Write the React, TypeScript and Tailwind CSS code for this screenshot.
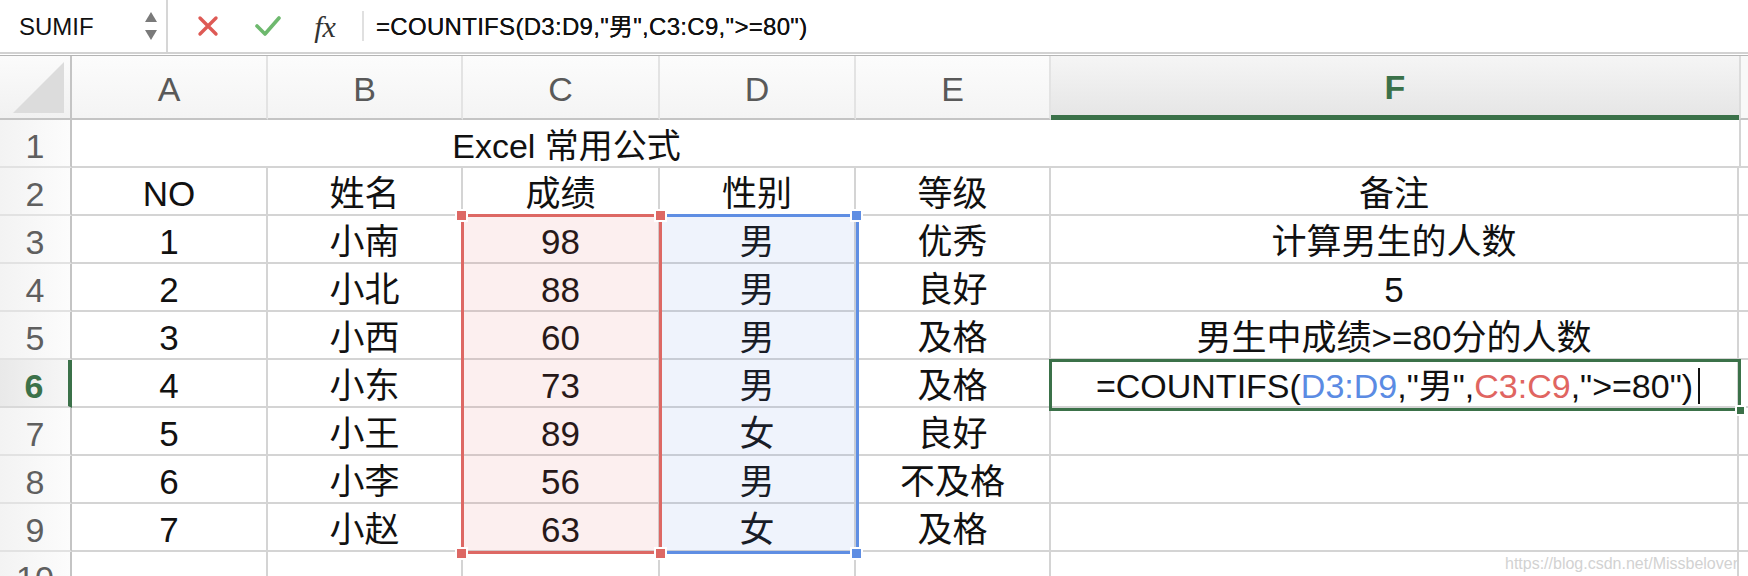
import React from 'react';

const widths = ['w-[196px]', 'w-[195px]', 'w-[197px]', 'w-[196px]', 'w-[195px]', 'w-[688px]'];
const letters = ['A', 'B', 'C', 'D', 'E', 'F'];

const rows: string[][] = [
  ['NO', '姓名', '成绩', '性别', '等级', '备注'],
  ['1', '小南', '98', '男', '优秀', '计算男生的人数'],
  ['2', '小北', '88', '男', '良好', '5'],
  ['3', '小西', '60', '男', '及格', '男生中成绩>=80分的人数'],
  ['4', '小东', '73', '男', '及格', ''],
  ['5', '小王', '89', '女', '良好', ''],
  ['6', '小李', '56', '男', '不及格', ''],
  ['7', '小赵', '63', '女', '及格', ''],
  ['', '', '', '', '', ''],
];

function RowHead({ n, active }: { n: number; active?: boolean }) {
  return (
    <div
      className={
        active
          ? 'w-[72px] shrink-0 h-full flex items-center justify-center pt-[7px] text-[34px] border-b-2 border-[#d9d9d9] border-r-[4px] border-r-[#3b7149] bg-gradient-to-r from-[#e9e9e9] to-[#f6f6f6] text-[#3b7149] font-bold'
          : 'w-[72px] shrink-0 h-full flex items-center justify-center pt-[7px] text-[34px] border-b-2 border-[#e2e2e2] border-r-2 border-r-[#c4c4c4] bg-gradient-to-r from-[#f3f3f3] to-[#fcfcfc] text-[#5f5f5f]'
      }
    >
      {n}
    </div>
  );
}

function Handle({ className }: { className: string }) {
  return <div className={'absolute w-[13px] h-[13px] border-2 border-white ' + className} />;
}

export default function App() {
  return (
    <div className="relative w-[1748px] h-[576px] overflow-hidden bg-white font-['Liberation_Sans','Noto_Sans_CJK_SC',sans-serif] text-[#111]">
      {/* FORMULA BAR */}
      <div className="h-[52px] flex items-center text-[24px]">
        <div className="w-[168px] h-full flex items-center border-r-2 border-[#d6d6d6] pl-[19px] pr-[8px]">
          <span className="flex-1 pt-[2px]">SUMIF</span>
          <svg width="14" height="34" viewBox="0 0 14 34">
            <path d="M7 3 L13 13 L1 13 Z" fill="#7a7a7a" />
            <path d="M7 31 L13 21 L1 21 Z" fill="#7a7a7a" />
          </svg>
        </div>
        <div className="w-[80px] flex justify-center">
          <svg width="22" height="22" viewBox="0 0 22 22">
            <path d="M3 3 L19 19 M19 3 L3 19" stroke="#de5a55" strokeWidth="3.4" strokeLinecap="round" />
          </svg>
        </div>
        <div className="w-[40px] flex justify-center">
          <svg width="26" height="22" viewBox="0 0 26 22">
            <path d="M2 11 L10 19 L24 3" stroke="#6eb96e" strokeWidth="3.6" fill="none" strokeLinecap="round" strokeLinejoin="round" />
          </svg>
        </div>
        <div className="w-[74px] flex justify-center items-center font-['Liberation_Serif',serif] italic text-[30px] text-[#333]">
          fx
        </div>
        <div className="h-[30px] w-[2px] bg-[#e0e0e0]" />
        <div className="pl-[12px] pt-[2px] tracking-[0.3px] [text-shadow:0_0_0.4px_#111]">=COUNTIFS(D3:D9,"男",C3:C9,"&gt;=80")</div>
      </div>
      <div className="h-[4px] border-t-2 border-b-[1px] border-t-[#d2d2d2] border-b-[#b5b5b5]" />

      {/* COLUMN HEADERS */}
      <div className="h-[64px] flex text-[34px] text-[#595959]">
        <div className="w-[72px] shrink-0 h-full border-r-2 border-b-2 border-[#c4c4c4] bg-gradient-to-b from-[#fbfbfb] to-[#f1f1f1] flex items-end justify-end pb-[3px] pr-[4px]">
          <svg width="54" height="54" viewBox="0 0 54 54">
            <path d="M1 52 L52 1 L52 52 Z" fill="#dcdcdc" />
          </svg>
        </div>
        {letters.map((l, i) =>
          l === 'F' ? (
            <div
              key={l}
              className={widths[i] + ' shrink-0 h-full flex items-center justify-center pt-[4px] border-b-[5px] border-[#3b7149] bg-gradient-to-b from-[#f5f5f5] to-[#e6e6e6] text-[#3b7149] font-bold'}
            >
              {l}
            </div>
          ) : (
            <div
              key={l}
              className={widths[i] + ' shrink-0 h-full flex items-center justify-center pt-[4px] border-r-2 border-r-[#e3e3e3] border-b-2 border-b-[#c4c4c4] bg-gradient-to-b from-[#fcfcfc] to-[#f4f4f4]'}
            >
              {l}
            </div>
          )
        )}
        <div className="flex-1 h-full border-l-2 border-[#dcdcdc] border-b-2 border-b-[#c4c4c4] bg-[#f8f8f8]" />
      </div>

      {/* ROW 1 */}
      <div className="h-[48px] flex text-[34px]">
        <RowHead n={1} />
        <div className="w-[979px] shrink-0 h-full flex items-center justify-center pt-[6px] pl-[10px] border-b-2 border-[#d4d4d4]">
          Excel 常用公式
        </div>
        <div className="w-[688px] shrink-0 h-full border-b-2 border-[#d4d4d4]" />
        <div className="flex-1 h-full border-l-2 border-b-2 border-[#d4d4d4]" />
      </div>

      {/* ROWS 2-10 */}
      {rows.map((r, ri) => (
        <div key={ri} className="h-[48px] flex text-[35px]">
          <RowHead n={ri + 2} active={ri === 4} />
          {r.map((c, ci) => (
            <div
              key={ci}
              className={widths[ci] + ' shrink-0 h-full flex items-center justify-center pt-[6px] border-r-2 border-b-2 border-[#d4d4d4] whitespace-nowrap'}
            >
              {ri === 4 && ci === 5 ? (
                <span className="flex items-center text-[34px] pl-[8px]">
                  =COUNTIFS(<span className="text-[#5b8be3]">D3:D9</span>,"男",<span className="text-[#e06561]">C3:C9</span>,"&gt;=80")
                  <span className="ml-[5px] w-[2px] h-[36px] bg-[#111]" />
                </span>
              ) : (
                c
              )}
            </div>
          ))}
          <div className="flex-1 h-full border-b-2 border-[#d4d4d4]" />
        </div>
      ))}

      {/* RANGE HIGHLIGHTS */}
      <div className="absolute left-[659px] top-[214px] w-[200px] h-[340px] border-[3px] border-[#5f8ee3] bg-[#5f8ee3]/10" />
      <Handle className="left-[850px] top-[209px] bg-[#5f8ee3]" />
      <Handle className="left-[850px] top-[547px] bg-[#5f8ee3]" />
      <div className="absolute left-[461px] top-[214px] w-[201px] h-[340px] border-[3px] border-[#dd6864] bg-[#e06666]/10" />
      <Handle className="left-[455px] top-[209px] bg-[#dd6864]" />
      <Handle className="left-[654px] top-[209px] bg-[#dd6864]" />
      <Handle className="left-[455px] top-[547px] bg-[#dd6864]" />
      <Handle className="left-[654px] top-[547px] bg-[#dd6864]" />

      {/* ACTIVE CELL F6 */}
      <div className="absolute left-[1049px] top-[359px] w-[692px] h-[52px] border-[3px] border-[#3b7149]" />
      <div className="absolute left-[1735px] top-[405px] w-[11px] h-[11px] bg-[#3b7149] border-2 border-white" />

      {/* WATERMARK */}
      <div className="absolute right-[10px] bottom-[0px] text-[16px] text-[#d2d2d2]">https://blog.csdn.net/Missbelover</div>
    </div>
  );
}
